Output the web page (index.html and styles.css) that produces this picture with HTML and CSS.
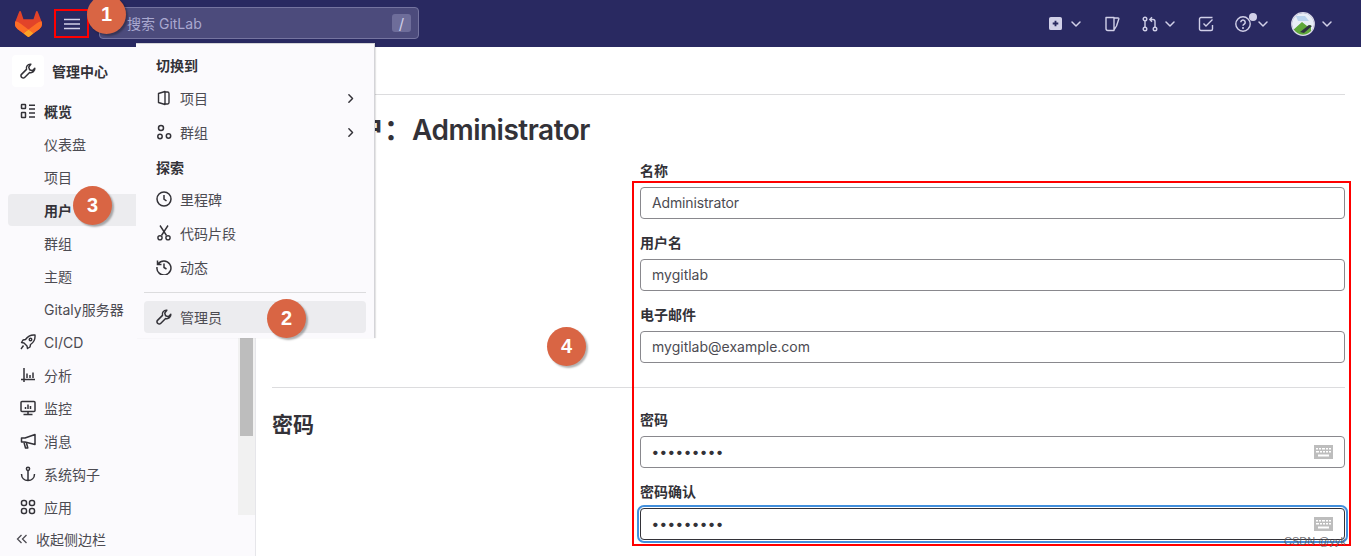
FILE: index.html
```html
<!DOCTYPE html>
<html lang="zh">
<head>
<meta charset="utf-8">
<title>编辑用户 · GitLab</title>
<link rel="stylesheet" href="styles.css">
</head>
<body>
<svg class="sprite" aria-hidden="true">
  <symbol id="i-chev" viewBox="0 0 16 16"><path d="M4 6l4 4 4-4" fill="none" stroke="currentColor" stroke-width="1.5" stroke-linecap="round" stroke-linejoin="round"/></symbol>
  <symbol id="i-right" viewBox="0 0 16 16"><path d="M6 3.5L10.5 8 6 12.5" fill="none" stroke="currentColor" stroke-width="1.8" stroke-linecap="round" stroke-linejoin="round"/></symbol>
  <symbol id="i-wrench" viewBox="0 0 16 16"><path d="M10.8 1.2a4 4 0 0 0-4.3 5.2L1.5 11.4a1.9 1.9 0 0 0 0 2.7l.4.4a1.9 1.9 0 0 0 2.7 0l5-5a4 4 0 0 0 5.2-4.3L12.3 7.700l-2.700-.9-.9-2.700z" fill="none" stroke="currentColor" stroke-width="1.5" stroke-linejoin="round"/></symbol>
  <symbol id="i-kbd" viewBox="0 0 19 14"><path fill-rule="evenodd" d="M0 0h19v14H0zM2 3v1.500h2V3zm3 0v1.500h2V3zm3 0v1.500h3V3zm4 0v1.500h2V3zm3 0v1.500h2V3zM2 6v1.500h3V6zm4 0v1.500h2V6zm3 0v1.500h2V6zm3 0v1.500h2V6zm3 0v1.500h2V6zM4 9.500v2h11v-2z" fill="currentColor"/></symbol>
</svg>

<header class="topbar">
  <svg class="logo" viewBox="0 0 25 24">
    <path d="m24.507 9.5-.034-.09L21.082.562a.896.896 0 0 0-1.694.091l-2.29 7.01H7.825L5.535.653a.898.898 0 0 0-1.694-.09L.451 9.411.416 9.5a6.297 6.297 0 0 0 2.09 7.278l.012.01.03.022 5.16 3.867 2.56 1.935 1.554 1.176a1.051 1.051 0 0 0 1.268 0l1.555-1.176 2.56-1.935 5.197-3.89.014-.01A6.297 6.297 0 0 0 24.507 9.5Z" fill="#E24329"/>
    <path d="m24.507 9.5-.034-.09a11.44 11.44 0 0 0-4.56 2.051l-7.447 5.632 4.742 3.584 5.197-3.89.014-.01A6.297 6.297 0 0 0 24.507 9.5Z" fill="#FC6D26"/>
    <path d="m7.707 20.677 2.56 1.935 1.555 1.176a1.051 1.051 0 0 0 1.268 0l1.555-1.176 2.56-1.935-4.743-3.584-4.755 3.584Z" fill="#FCA326"/>
    <path d="M5.01 11.461a11.43 11.43 0 0 0-4.56-2.05L.416 9.5a6.297 6.297 0 0 0 2.09 7.278l.012.01.03.022 5.16 3.867 4.745-3.584-7.444-5.632Z" fill="#FC6D26"/>
  </svg>
  <button class="burger" aria-label="菜单">
    <svg viewBox="0 0 16 16"><path d="M0 3.500h16M0 8h16M0 12.500h16" fill="none" stroke="currentColor" stroke-width="1.300"/></svg>
  </button>
  <div class="search">
    <span class="search-text">搜索 GitLab</span>
    <kbd class="slash">/</kbd>
  </div>
  <nav class="top-actions">
    <span class="act act-plus">
      <svg class="ic14" viewBox="0 0 14 14"><path fill-rule="evenodd" d="M2 0h10a2 2 0 0 1 2 2v10a2 2 0 0 1-2 2H2a2 2 0 0 1-2-2V2a2 2 0 0 1 2-2zm4 4v2H4v2h2v2h2V8h2V6H8V4z" fill="currentColor"/></svg>
      <svg class="chev"><use href="#i-chev"/></svg>
    </span>
    <span class="act act-issue">
      <svg class="ic16" viewBox="0 0 16 16"><path d="M2 1.500h8v13H4a2 2 0 0 1-2-2zM10 2l4 0a.8.8 0 0 1 .8 1L12.500 10 10 14" fill="none" stroke="currentColor" stroke-width="1.400" stroke-linejoin="round"/></svg>
    </span>
    <span class="act act-mr">
      <svg class="ic16" viewBox="0 0 16 16"><g fill="none" stroke="currentColor" stroke-width="1.400"><circle cx="3" cy="3" r="1.800"/><circle cx="3" cy="13" r="1.800"/><circle cx="13" cy="13" r="1.800"/><path d="M3 5v6M13 11V5.500a2 2 0 0 0-2-2H8M10 1.200L7.800 3.500 10 5.800"/></g></svg>
      <svg class="chev"><use href="#i-chev"/></svg>
    </span>
    <span class="act act-todo">
      <svg class="ic16" viewBox="0 0 16 16"><path d="M14.500 9v4a1.500 1.500 0 0 1-1.500 1.500H3A1.500 1.500 0 0 1 1.500 13V3A1.500 1.500 0 0 1 3 1.500h11.500M5.500 7.500L8 10l6.500-6.500" fill="none" stroke="currentColor" stroke-width="1.400"/></svg>
    </span>
    <span class="act act-help">
      <svg class="ic16" viewBox="0 0 16 16"><circle cx="8" cy="8" r="7.200" fill="none" stroke="currentColor" stroke-width="1.400"/><path d="M5.800 6.200a2.200 2.200 0 1 1 3.400 1.900C8.400 8.600 8 9 8 9.800" fill="none" stroke="currentColor" stroke-width="1.500"/><circle cx="8" cy="12" r="1" fill="currentColor"/></svg>
      <i class="dot"></i>
      <svg class="chev"><use href="#i-chev"/></svg>
    </span>
    <span class="act act-user">
      <svg class="avatar" viewBox="0 0 24 24">
        <defs><clipPath id="av"><circle cx="12" cy="12" r="11"/></clipPath></defs>
        <g clip-path="url(#av)"><rect width="24" height="24" fill="#e8eef6"/><path d="M5 4h9l4 5H7z" fill="#b9d3ec"/><path d="M1 19l10-9 5 4 4-1v11H1z" fill="#5fa83a"/><path d="M9 20l9-7 3 1-8 7z" fill="#2f3340"/></g>
        <circle cx="12" cy="12" r="11.300" fill="none" stroke="#d9d8e8" stroke-width="1.200"/>
      </svg>
      <svg class="chev"><use href="#i-chev"/></svg>
    </span>
  </nav>
</header>

<div class="layout">
  <aside class="sidebar">
    <div class="side-scroll">
      <div class="side-list">
        <div class="context">
          <span class="context-icon"><svg class="ic16"><use href="#i-wrench"/></svg></span>
          <span class="context-name">管理中心</span>
        </div>
        <ul class="nav">
          <li class="nav-row strong">
            <svg class="ic16" viewBox="0 0 16 16"><g fill="none" stroke="currentColor" stroke-width="1.500"><rect x="1.500" y="1.500" width="4" height="4" rx=".5"/><rect x="1.500" y="9.500" width="4" height="5" rx=".5"/><path d="M9 2.200h6M9 6h6M9 10h6M9 14h6"/></g></svg>
            <span>概览</span>
          </li>
          <li class="nav-row plain"><span>仪表盘</span></li>
          <li class="nav-row plain"><span>项目</span></li>
          <li class="nav-row plain current"><span>用户</span></li>
          <li class="nav-row plain"><span>群组</span></li>
          <li class="nav-row plain"><span>主题</span></li>
          <li class="nav-row plain"><span>Gitaly服务器</span></li>
          <li class="nav-row">
            <svg class="ic16" viewBox="0 0 16 16"><g fill="none" stroke="currentColor" stroke-width="1.400" stroke-linejoin="round"><path d="M15 1c-4-.4-7 .8-9.500 4.500L3 6 1.500 8.500l2.500.5 3 3 .5 2.500L10 13l.5-2.500C14.200 8 15.400 5 15 1z"/><circle cx="10.500" cy="5.500" r="1.300"/><path d="M3.500 11.500L1 15"/></g></svg>
            <span>CI/CD</span>
          </li>
          <li class="nav-row">
            <svg class="ic16" viewBox="0 0 16 16"><path d="M4 1v14M1 12.500h14M7 11V6.500M10 11V8M13 11V5.500" fill="none" stroke="currentColor" stroke-width="1.500"/></svg>
            <span>分析</span>
          </li>
          <li class="nav-row">
            <svg class="ic16" viewBox="0 0 16 16"><g fill="none" stroke="currentColor" stroke-width="1.500"><rect x="1" y="1.500" width="14" height="10" rx="1"/><path d="M8 11.500V14M3.500 14.500h9M5.500 9V7M8 9V4.500M10.500 9V6"/></g></svg>
            <span>监控</span>
          </li>
          <li class="nav-row">
            <svg class="ic16" viewBox="0 0 16 16"><g fill="none" stroke="currentColor" stroke-width="1.500" stroke-linejoin="round"><path d="M15 1.500v10L5 9H1.500V5H5z"/><path d="M4 9.500L5.500 15h2.300L6.500 10"/></g></svg>
            <span>消息</span>
          </li>
          <li class="nav-row">
            <svg class="ic16" viewBox="0 0 16 16"><g fill="none" stroke="currentColor" stroke-width="1.500"><circle cx="8" cy="2.800" r="1.600"/><path d="M8 4.500V14.500M1.500 8c0 4 2.800 6.500 6.500 6.500s6.500-2.500 6.500-6.500"/></g></svg>
            <span>系统钩子</span>
          </li>
          <li class="nav-row">
            <svg class="ic16" viewBox="0 0 16 16"><g fill="none" stroke="currentColor" stroke-width="1.500"><rect x="1.500" y="1.500" width="5" height="5" rx="2"/><rect x="9.500" y="1.500" width="5" height="5" rx="2"/><rect x="1.500" y="9.500" width="5" height="5" rx="2"/><rect x="9.500" y="9.500" width="5" height="5" rx="2"/></g></svg>
            <span>应用</span>
          </li>
        </ul>
      </div>
      <div class="side-track"><div class="side-thumb"></div></div>
    </div>
    <div class="collapse">
      <svg class="ic12" viewBox="0 0 12 12"><path d="M5.500 2L1.500 6l4 4M10.500 2l-4 4 4 4" fill="none" stroke="currentColor" stroke-width="1.300"/></svg>
      <span>收起侧边栏</span>
    </div>
  </aside>

  <main class="content">
    <div class="crumbs"></div>
    <h1 class="page-title">编辑用户：<span class="latin-tight">Administrator</span></h1>
    <section class="form-section first">
      <div class="form-side"></div>
      <div class="form-fields">
        <div class="field"><label>名称</label><div class="input"><span class="name-tight">Administrator</span></div></div>
        <div class="field"><label>用户名</label><div class="input">mygitlab</div></div>
        <div class="field"><label>电子邮件</label><div class="input">mygitlab@example.com</div></div>
      </div>
    </section>
    <section class="form-section second">
      <h2 class="form-side section-title">密码</h2>
      <div class="form-fields">
        <div class="field"><label>密码</label><div class="input secret"><span class="dots">•••••••••</span><svg class="kbd"><use href="#i-kbd"/></svg></div></div>
        <div class="field"><label>密码确认</label><div class="input secret focused"><span class="dots">•••••••••</span><svg class="kbd"><use href="#i-kbd"/></svg></div></div>
      </div>
    </section>
  </main>
</div>

<div class="menu">
  <div class="menu-head">切换到</div>
  <div class="menu-row">
    <svg class="ic16" viewBox="0 0 16 16"><path d="M2.500 3.500L9 1.500v13L2.500 12.500zM9 2h2.500A1.500 1.500 0 0 1 13 3.500v9a1.500 1.500 0 0 1-1.500 1.500H9" fill="none" stroke="currentColor" stroke-width="1.400" stroke-linejoin="round"/></svg>
    <span>项目</span><svg class="menu-more"><use href="#i-right"/></svg>
  </div>
  <div class="menu-row">
    <svg class="ic16" viewBox="0 0 16 16"><g fill="none" stroke="currentColor" stroke-width="1.500"><circle cx="5" cy="4" r="2.500"/><circle cx="4" cy="12.500" r="2.200"/><circle cx="12.500" cy="12" r="2.200"/></g></svg>
    <span>群组</span><svg class="menu-more"><use href="#i-right"/></svg>
  </div>
  <div class="menu-head second">探索</div>
  <div class="menu-row">
    <svg class="ic16" viewBox="0 0 16 16"><circle cx="8" cy="8" r="7" fill="none" stroke="currentColor" stroke-width="1.500"/><path d="M8 4v4.200l2.500 1.800" fill="none" stroke="currentColor" stroke-width="1.500"/></svg>
    <span>里程碑</span>
  </div>
  <div class="menu-row">
    <svg class="ic16" viewBox="0 0 16 16"><g fill="none" stroke="currentColor" stroke-width="1.400"><path d="M4 .5l6.500 10M12 .5L5.500 10.500"/><circle cx="4" cy="12.800" r="2.100"/><circle cx="12" cy="12.800" r="2.100"/></g></svg>
    <span>代码片段</span>
  </div>
  <div class="menu-row">
    <svg class="ic16" viewBox="0 0 16 16"><g fill="none" stroke="currentColor" stroke-width="1.500"><path d="M2.200 5A7 7 0 1 1 1 8M1.500 1.500V5.500H5.500M8 4.500V8.500l2.500 1.500"/></g></svg>
    <span>动态</span>
  </div>
  <div class="menu-rule"></div>
  <div class="menu-row active">
    <svg class="ic16"><use href="#i-wrench"/></svg>
    <span>管理员</span>
  </div>
</div>

<div class="mark mark-burger"></div>
<div class="mark mark-fields"></div>
<div class="badge b1">1</div>
<div class="badge b2">2</div>
<div class="badge b3">3</div>
<div class="badge b4">4</div>
<div class="watermark">CSDN @yyk</div>
</body>
</html>
```
FILE: styles.css
```css
* { box-sizing: border-box; }
html, body { margin: 0; height: 556px; overflow: hidden; }
body {
  position: relative;
  background: #fff;
  color: #333238;
  font-family: Inter, "Noto Sans CJK SC", sans-serif;
  font-size: 14px;
}
.sprite { display: none; }
svg { display: block; flex: none; }
.ic16 { width: 16px; height: 16px; }
.ic12 { width: 12px; height: 12px; }

/* top bar */
.topbar {
  height: 47px;
  margin-right: 1px;
  background: #292961;
  display: flex;
  align-items: center;
  color: #d1d0e8;
}
.logo { width: 27px; height: 26px; margin-left: 15px; }
.burger {
  width: 32px; height: 30px;
  margin-left: 14px;
  padding: 0;
  background: none;
  border: 0;
  color: #d1d0e8;
  display: flex; align-items: center; justify-content: center;
}
.burger svg { width: 16px; height: 16px; }
.search {
  width: 320px; height: 32px;
  margin-left: 11px;
  margin-top: -1px;
  padding: 0 7px 0 27px;
  display: flex; align-items: center; justify-content: space-between;
  background: #4c4b7c;
  border: 1px solid #7574a0;
  border-radius: 4px;
}
.search-text { color: #a9a8d0; font-size: 14px; }
.slash {
  width: 19px; height: 18px;
  display: flex; align-items: center; justify-content: center;
  background: #6e6d9a;
  border-radius: 3px;
  color: #d1d0e8;
  font: 15px Inter, sans-serif;
}
.top-actions {
  margin-left: auto;
  padding-right: 26px;
  display: flex; align-items: center;
}
.act { display: flex; align-items: center; position: relative; }
.ic14 { width: 13px; height: 13px; }
.chev { width: 16px; height: 16px; }
.act-plus .chev { margin-left: 6px; }
.act-issue { margin-left: 20px; }
.act-mr { margin-left: 22px; }
.act-mr .chev { margin-left: 4px; }
.act-todo { margin-left: 20px; }
.act-help { margin-left: 21px; }
.act-help .chev { margin-left: 4px; }
.dot {
  position: absolute;
  left: 14px; top: -3px;
  width: 8px; height: 8px;
  border-radius: 50%;
  background: #d1d0e8;
}
.act-user { margin-left: 20px; }
.avatar { width: 24px; height: 24px; }
.act-user .chev { margin-left: 4px; }

/* page layout */
.layout { display: flex; height: 509px; }
.sidebar {
  width: 256px;
  flex: none;
  background: #fbfafd;
  border-right: 1px solid #e6e6ea;
  display: flex; flex-direction: column;
}
.side-scroll { display: flex; height: 468px; }
.side-list { flex: 1; min-width: 0; padding: 8px 0 0 8px; }
.side-track { width: 17px; background: #f1f1f1; padding: 0 2px; }
.side-thumb { height: 389px; background: #bdbdbd; }
.context {
  display: flex; align-items: center;
  height: 32px;
  margin-bottom: 8px;
  padding-left: 4px;
  font-weight: 600;
  font-size: 14px;
}
.context-icon {
  width: 32px; height: 32px;
  display: flex; align-items: center; justify-content: center;
  background: #fff;
  border-radius: 4px;
  margin-right: 8px;
}
.nav { list-style: none; margin: 0; padding: 0; display: flex; flex-direction: column; gap: 1px; }
.nav-row {
  height: 32px;
  display: flex; align-items: center; gap: 8px;
  padding-left: 12px;
  border-radius: 4px;
  font-size: 14px;
  color: #4c4b52;
}
.nav-row .ic16 { width: 16px; height: 16px; color: #333238; }
.nav-row.strong { font-weight: 600; color: #333238; }
.nav-row.plain { padding-left: 36px; }
.nav-row.current { background: #ececef; font-weight: 600; color: #333238; }
.collapse {
  flex: 1;
  display: flex; align-items: center; gap: 8px;
  padding: 6px 0 0 16px;
  font-size: 14px;
  color: #4c4b52;
}

/* main */
.content { flex: 1; min-width: 0; padding: 0 17px 0 16px; }
.crumbs { height: 48px; border-bottom: 1px solid #dcdcde; }
.page-title {
  margin: 17px 0 0;
  font-size: 28px;
  line-height: 36px;
  font-weight: 600;
}
.latin-tight { letter-spacing: -.5px; }
.name-tight { letter-spacing: -.15px; }
.form-section { display: grid; grid-template-columns: 368px 1fr; }
.form-section.first { margin-top: 15px; padding-bottom: 24px; border-bottom: 1px solid #dcdcde; }
.form-section.second { padding-top: 24px; }
.form-fields { display: flex; flex-direction: column; gap: 16px; min-width: 0; }
.field label {
  display: block;
  height: 24px;
  line-height: 16px;
  font-weight: 600;
  font-size: 14px;
}
.input {
  height: 32px;
  border: 1px solid #89888d;
  border-radius: 4px;
  padding: 0 12px 1px 11px;
  display: flex; align-items: center; justify-content: space-between;
  font-size: 14px;
  color: #4c4b52;
}
.input.focused {
  border-color: #333238;
  box-shadow: 0 0 0 1px #fff, 0 0 0 3px #428fdc;
}
.dots { letter-spacing: 1.4px; font-size: 14px; color: #333238; font-weight: 700; }
.kbd { width: 19px; height: 14px; color: #bdbdbd; margin-right: -1px; }
.section-title {
  margin: -1px 0 0;
  font-size: 21px;
  line-height: 28px;
  font-weight: 600;
}

/* switcher menu */
.menu {
  position: absolute;
  left: 136px; top: 43px;
  width: 239px; height: 295px;
  padding: 5px 8px 0;
  background: #fbfafd;
  border: 1px solid #d4d4d8;
  border-width: 1px 1px 0 0;
  box-shadow: 1px 0 1px rgba(0,0,0,.1);
  font-size: 14px;
  color: #4c4b52;
}
.menu-head {
  height: 32px;
  display: flex; align-items: center;
  padding-left: 12px;
  font-weight: 600;
  color: #333238;
}
.menu-head.second { margin-top: 2px; height: 31px; }
.menu-row {
  height: 34px;
  display: flex; align-items: center; gap: 8px;
  padding-left: 12px;
}
.menu-row .ic16 { color: #333238; }
.menu-more { width: 13px; height: 13px; margin-left: auto; margin-right: 9px; color: #333238; }
.menu-rule { height: 1px; background: #dcdcde; margin: 8px 0; }
.menu-row.active { height: 32px; background: #ececef; border-radius: 4px; }

/* annotations drawn on top of the screenshot */
.mark { position: absolute; border: 2px solid #f00; }
.mark-burger { left: 54px; top: 9px; width: 35px; height: 29px; }
.mark-fields { left: 632px; top: 181px; width: 719px; height: 365px; }
.badge {
  position: absolute;
  width: 39px; height: 39px;
  display: flex; align-items: center; justify-content: center;
  border-radius: 50%;
  background: #d96544;
  box-shadow: 2px 2px 2px rgba(0,0,0,.3);
  color: #fff;
  font: 700 20px "Liberation Sans", sans-serif;
}
.b1 { left: 87px; top: -5px; }
.b2 { left: 267px; top: 299px; }
.b3 { left: 73px; top: 186px; }
.b4 { left: 547px; top: 327px; }
.watermark {
  position: absolute;
  right: 16px; bottom: 9px;
  color: rgba(85,85,90,.85);
  font: 11px/12px "Liberation Sans", sans-serif;
}
```
